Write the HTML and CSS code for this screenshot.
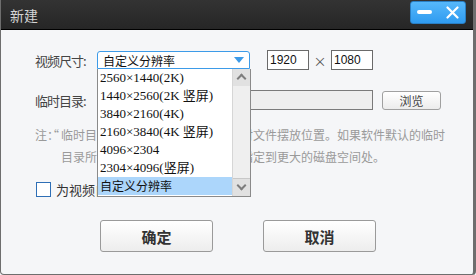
FILE: index.html
```html
<!DOCTYPE html>
<html lang="zh-CN">

<head>
    <meta charset="UTF-8">
    <meta name="viewport" content="width=device-width, initial-scale=1.0">
    <title>新建</title>
    <link rel="stylesheet" href="styles.css">
</head>

<body>
    <div class="window">
        <div class="titlebar">
            <span class="title">新建</span>
            <div class="win-buttons">
                <span class="min-btn"></span>
                <svg class="close-btn" width="13" height="13" viewBox="0 0 13 13">
                    <path d="M1.5 1.5 L11.5 11.5 M11.5 1.5 L1.5 11.5" stroke="#fff" stroke-width="2.2" stroke-linecap="round" />
                </svg>
            </div>
        </div>

        <div class="content">
            <div class="row">
                <label class="label">视频尺寸:</label>
                <div class="select">
                    <span>自定义分辨率</span>
                    <span class="arrow"></span>
                </div>
                <input class="num first" type="text" value="1920">
                <span class="times">×</span>
                <input class="num" type="text" value="1080">
            </div>

            <div class="row second">
                <label class="label">临时目录:</label>
                <input class="path" type="text" value="">
                <button class="browse">浏览</button>
            </div>

            <div class="note">
                <span class="note-head">注：“</span>
                <p class="note-text">临时目录”是视频合成过程中的临时文件摆放位置。如果软件默认的临时<br>目录所在磁盘空间不足，请将目录指定到更大的磁盘空间处。</p>
            </div>

            <div class="check-row">
                <span class="checkbox"></span>
                <span>为视频自动添加片头片尾</span>
            </div>

            <div class="actions">
                <button class="btn">确定</button>
                <button class="btn">取消</button>
            </div>
        </div>

        <!-- open dropdown of the size select -->
        <div class="dropdown">
            <ul class="options">
                <li>2560×1440(2K)</li>
                <li>1440×2560(2K 竖屏)</li>
                <li>3840×2160(4K)</li>
                <li>2160×3840(4K 竖屏)</li>
                <li>4096×2304</li>
                <li>2304×4096(竖屏)</li>
                <li class="selected">自定义分辨率</li>
            </ul>
            <div class="scrollbar">
                <span class="sb-btn up"></span>
                <span class="sb-track"></span>
                <span class="sb-btn down"></span>
            </div>
        </div>
    </div>
</body>

</html>
```

FILE: styles.css
```css
html {
    background: #f5f6f8;
}

body {
    margin: 0;
    padding: 0;
    font-family: "Noto Sans CJK SC", sans-serif;
    color: #333;
}

.window {
    position: relative;
    box-sizing: border-box;
    width: 476px;
    height: 275px;
    background: #f5f6f8;
    border: 1px solid #6e6e6e;
    border-top: none;
    border-right-width: 3px;
    border-radius: 0 0 4px 4px;
    overflow: hidden;
}

.titlebar {
    display: flex;
    align-items: flex-start;
    height: 29px;
    background: linear-gradient(#333333, #262626);
    border-bottom: 1px solid #000;
    margin: 0 -3px 0 -1px;
}

.title {
    margin: 5px 0 0 10px;
    font-size: 14px;
    line-height: 20px;
    color: #d4d4d4;
}

.win-buttons {
    display: flex;
    align-items: center;
    box-sizing: border-box;
    width: 56px;
    height: 23px;
    margin: 1px 10px 0 auto;
    padding-left: 6px;
    background: linear-gradient(#56b8fb, #2f9bf0);
    border: 1px solid #2a7fc4;
    border-radius: 3px;
}

.min-btn {
    width: 15px;
    height: 4px;
    margin-top: -1px;
    background: #fff;
    border-radius: 2px;
}

.close-btn {
    margin-left: 14px;
    margin-top: -1px;
}

.content {
    padding: 20px 0 0 34px;
}

.row {
    display: flex;
    align-items: center;
    height: 20px;
}

.row.second {
    margin-top: 20px;
}

.label {
    width: 62px;
    font-size: 13px;
    letter-spacing: -1px;
    color: #444;
}

.select {
    display: flex;
    align-items: center;
    box-sizing: border-box;
    width: 153px;
    height: 18px;
    padding-left: 5px;
    background: #fff;
    border: 1px solid #3d9be8;
    border-radius: 3px 3px 0 0;
    font-size: 12px;
    color: #111;
}

.arrow {
    margin-left: auto;
    margin-right: 5px;
    width: 0;
    height: 0;
    border-left: 5px solid transparent;
    border-right: 5px solid transparent;
    border-top: 6px solid #3d9be8;
}

.num {
    box-sizing: border-box;
    width: 42px;
    height: 20px;
    padding: 0 2px;
    border: 1px solid #6a6a6a;
    font-family: "Liberation Sans", sans-serif;
    font-size: 12px;
    color: #111;
    background: #fff;
    outline: none;
}

.num.first {
    margin-left: 17px;
}

.times {
    width: 22px;
    text-align: center;
    font-size: 13px;
    color: #555;
}

.path {
    box-sizing: border-box;
    width: 276px;
    height: 20px;
    background: #eeeeee;
    border: 1px solid #7a7a7a;
    outline: none;
}

.browse {
    box-sizing: border-box;
    width: 59px;
    height: 19px;
    margin-left: 9px;
    padding: 0;
    background: linear-gradient(#ffffff, #ececec);
    border: 1px solid #a0a0a0;
    border-radius: 3px;
    font-family: "Noto Sans CJK SC", sans-serif;
    font-size: 12px;
    color: #444;
}

.note {
    display: flex;
    margin-top: 14px;
    font-size: 12px;
    line-height: 22px;
    color: #9a9a9a;
}

.note-head {
    width: 26px;
    flex-shrink: 0;
    white-space: nowrap;
    font-feature-settings: "halt";
}

.note-text {
    margin: 0;
    white-space: nowrap;
}

.check-row {
    display: flex;
    align-items: center;
    gap: 5px;
    height: 14px;
    margin-top: 14px;
    padding-left: 1px;
    font-size: 13px;
    color: #333;
}

.checkbox {
    box-sizing: border-box;
    width: 15px;
    height: 15px;
    background: #fff;
    border: 1px solid #2e6fb6;
}

.actions {
    display: flex;
    gap: 50px;
    margin: 24px 0 0 65px;
}

.btn {
    box-sizing: border-box;
    width: 113px;
    height: 32px;
    padding: 0;
    background: linear-gradient(#ffffff, #ededed);
    border: 1px solid #9a9a9a;
    border-radius: 3px;
    font-family: "Noto Sans CJK SC", sans-serif;
    font-size: 15px;
    font-weight: bold;
    color: #333;
}

.dropdown {
    position: absolute;
    left: 96px;
    top: 69px;
    display: flex;
    box-sizing: border-box;
    width: 154px;
    height: 128px;
    background: #fff;
    border: 1px solid #8a8a8a;
    border-top: none;
}

.options {
    flex: 1;
    list-style: none;
    margin: 0;
    padding: 0;
}

.options li {
    height: 18px;
    padding-left: 2px;
    font-family: "Liberation Serif", "Noto Sans CJK SC", serif;
    font-size: 13px;
    line-height: 18px;
    color: #111;
    white-space: nowrap;
}

.options li.selected {
    background: #acd6fb;
    font-family: "Noto Sans CJK SC", sans-serif;
    font-size: 12px;
}

.scrollbar {
    display: flex;
    flex-direction: column;
    width: 17px;
    background: #ececec;
    border-left: 1px solid #d6d6d6;
}

.sb-btn {
    position: relative;
    height: 17px;
    background: #e1e1e1;
}

.sb-btn.down {
    border-top: 1px solid #c8c8c8;
}

.sb-btn::after {
    content: "";
    position: absolute;
    left: 5px;
    width: 5px;
    height: 5px;
    border-left: 2px solid #7d7d7d;
    border-top: 2px solid #7d7d7d;
}

.sb-btn.up::after {
    top: 6px;
    transform: rotate(45deg);
}

.sb-btn.down::after {
    top: 3px;
    transform: rotate(225deg);
}

.sb-track {
    flex: 1;
    background: #efefef;
}
```
